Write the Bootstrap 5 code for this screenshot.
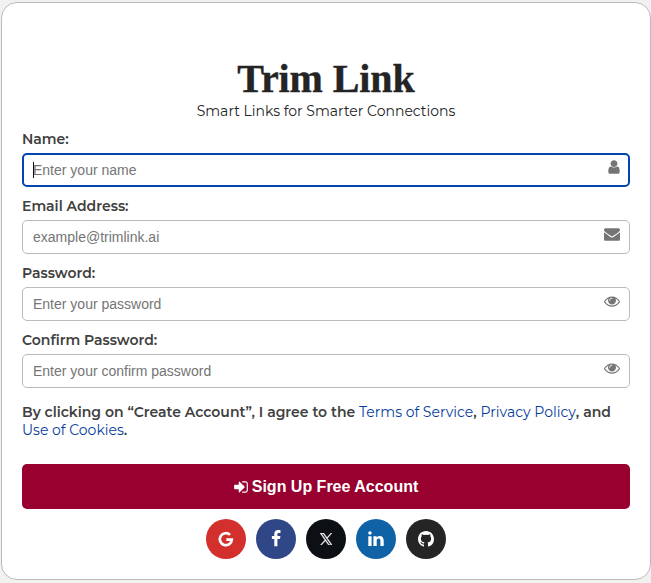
<!DOCTYPE html>
<html lang="en">
<head>
<meta charset="utf-8">
<meta name="viewport" content="width=device-width, initial-scale=1">
<title>Trim Link</title>
<link href="https://cdn.jsdelivr.net/npm/bootstrap@5.3.0/dist/css/bootstrap.min.css" rel="stylesheet">
<style>
body{background:#f1f1f1;font-family:Montserrat,Inter,sans-serif;font-size:14px;line-height:18px;color:#242424;height:583px;overflow:hidden}
.signup{margin:2px 0 0 1px;width:650px;height:578px;border:1px solid #bbb;border-radius:16px;padding:56px 20px 0}
.brand{font:700 40px/40px "Liberation Serif",serif;color:#242424;-webkit-text-stroke:.4px #242424;letter-spacing:-.1px}
.tagline{height:18px;margin:3px 0 10px}
.field-row{margin-bottom:10px}
.field-label{display:block;font-weight:600;color:#404040;line-height:18px;margin-bottom:5px}
.field{height:34px;border:1px solid #bbb;border-radius:5px;padding:0 10px;font:14px "Liberation Sans",sans-serif;color:#333;box-shadow:none!important}
.field::placeholder{color:#757575;opacity:1}
.field.active{border:2px solid #0443b4;padding:0 9px}
.field-icon{position:absolute;right:10px;top:6px;width:16px;height:16px;fill:#757575}
.user-icon{right:8px}
.caret{position:absolute;left:11px;top:9px;width:1px;height:16px;background:#111}
.terms{font-weight:600;color:#404040;line-height:18px;margin:15px 0 25px}
.terms a{font-weight:400;color:#063d9b}
.submit{height:45px;background:#97002f!important;border:0;border-radius:5px;color:#fff!important;font:700 16px "Liberation Sans",sans-serif;gap:3px;padding:0 1px 0 0}
.social-row{gap:10px;margin-top:10px}
.social{width:40px;height:40px;border-radius:50%}
.social svg{fill:#fff}
.google{background:#d32f2d}
.facebook{background:#304787}
.xcorp{background:#0c1015}
.linkedin{background:#1062a7}
.github{background:#252525}
</style>
<script src="https://cdn.jsdelivr.net/npm/bootstrap@5.3.0/dist/js/bootstrap.bundle.min.js"></script>
</head>
<body>
<main class="signup bg-white">
<form>
<h1 class="brand text-center mb-0">Trim Link</h1>
<p class="tagline text-center">Smart Links for Smarter Connections</p>
<div class="field-row">
<label class="field-label" for="name">Name:</label>
<div class="position-relative"><input id="name" class="form-control field active" placeholder="Enter your name"><span class="caret"></span>
<svg class="field-icon user-icon" viewBox="0 0 1792 1792"><path d="M1536 1399q0 109-62.5 187t-150.5 78h-854q-88 0-150.5-78t-62.5-187q0-85 8.5-160.5t31.5-152 58.5-131 94-89 134.5-34.5q131 128 313 128t313-128q76 0 134.5 34.5t94 89 58.5 131 31.5 152 8.5 160.5zm-256-887q0 159-112.5 271.5t-271.5 112.5-271.5-112.5-112.5-271.5 112.5-271.5 271.5-112.5 271.5 112.5 112.5 271.5z"/></svg></div>
</div>
<div class="field-row">
<label class="field-label" for="email">Email Address:</label>
<div class="position-relative"><input id="email" class="form-control field" placeholder="example@trimlink.ai">
<svg class="field-icon" viewBox="0 0 1792 1792"><path d="M1792 710v794q0 66-47 113t-113 47h-1472q-66 0-113-47t-47-113v-794q44 49 101 87 362 246 497 345 57 42 92.5 65.5t94.5 48 110 24.5h2q51 0 110-24.5t94.5-48 92.5-65.5q170-123 498-345 57-39 100-87zm0-294q0 79-49 151t-122 123q-376 261-468 325-10 7-42.5 31t-54 38.5-52 32.5-57.5 27-50 9h-2q-23 0-50-9t-57.5-27-52-32.5-54-38.5-42.5-31q-91-64-262-182.5t-205-142.5q-62-42-117-115.5t-55-136.5q0-78 41.5-130t118.5-52h1472q65 0 112.5 47t47.5 113z"/></svg></div>
</div>
<div class="field-row">
<label class="field-label" for="pass">Password:</label>
<div class="position-relative"><input id="pass" type="password" class="form-control field" placeholder="Enter your password">
<svg class="field-icon" viewBox="0 0 1792 1792"><path id="eye" d="M1664 960q-152-236-381-353 61 104 61 225 0 185-131.5 316.5t-316.5 131.5-316.5-131.5-131.5-316.5q0-121 61-225-229 117-381 353 133 205 333.5 326.5t434.5 121.5 434.5-121.5 333.5-326.5zm-720-384q0-20-14-34t-34-14q-125 0-214.5 89.5t-89.5 214.5q0 20 14 34t34 14 34-14 14-34q0-86 61-147t147-61q20 0 34-14t14-34zm848 384q0 34-20 69-140 230-376.5 368.5t-499.5 138.5-499.5-139-376.5-368q-20-35-20-69t20-69q140-229 376.5-368t499.5-139 499.5 139 376.5 368q20 35 20 69z"/></svg></div>
</div>
<div>
<label class="field-label" for="confirm">Confirm Password:</label>
<div class="position-relative"><input id="confirm" type="password" class="form-control field" placeholder="Enter your confirm password">
<svg class="field-icon" viewBox="0 0 1792 1792"><use href="#eye"/></svg></div>
</div>
<p class="terms">By clicking on “Create Account”, I agree to the <a class="text-decoration-none" href="#">Terms of Service</a>, <a class="text-decoration-none" href="#">Privacy Policy</a>, and<br><a class="text-decoration-none" href="#">Use of Cookies</a>.</p>
<button type="button" class="btn submit w-100 d-flex justify-content-center align-items-center"><svg width="16" height="16" fill="#fff" viewBox="0 0 1792 1792"><path d="M1312 896q0 26-19 45l-544 544q-19 19-45 19t-45-19-19-45v-288h-448q-26 0-45-19t-19-45v-384q0-26 19-45t45-19h448v-288q0-26 19-45t45-19 45 19l544 544q19 19 19 45zm352-352v704q0 119-84.5 203.5t-203.5 84.5h-320q-13 0-22.5-9.5t-9.5-22.5q0-4-1-20t-.5-26.5 3-23.5 10-19.5 20.5-6.5h320q66 0 113-47t47-113v-704q0-66-47-113t-113-47h-312l-11.5-1-11.5-3-8-5.5-7-9-2-13.5q0-4-1-20t-.5-26.5 3-23.5 10-19.5 20.5-6.5h320q119 0 203.5 84.5t84.5 203.5z"/></svg>Sign Up Free Account</button>
<div class="social-row d-flex justify-content-center">
<a href="#" aria-label="Google" class="social google d-flex align-items-center justify-content-center"><svg width="18" height="18" viewBox="0 0 18 18"><path d="M13 4.900A6 6 0 1 0 14.800 9.600H9.300" fill="none" stroke="#fff" stroke-width="2.700"/></svg></a>
<a href="#" aria-label="Facebook" class="social facebook d-flex align-items-center justify-content-center"><svg width="18" height="18" viewBox="0 0 18 18"><path d="M13.500.2v2.800h-1.700c-1.100 0-1.400.5-1.400 1.300v1.800h3l-.4 2.800h-2.600v7.300H7.300V8.900H4.900V6.100h2.400V3.900C7.300 1.400 8.800.1 11.200.1c1 0 1.900.1 2.300.1Z"/></svg></a>
<a href="#" aria-label="X" class="social xcorp d-flex align-items-center justify-content-center"><svg width="12.500" height="12.500" viewBox="0 0 16 16"><path stroke="#fff" stroke-width=".5" d="M9.520 6.780 15.480 0h-1.410L8.900 5.880 4.770 0H0l6.250 8.900L0 16h1.410l5.460-6.200L11.230 16H16L9.520 6.780ZM7.590 8.970l-.63-.88L1.920 1.040h2.170l4.060 5.690.63.89 5.290 7.390H11.900L7.590 8.970Z"/></svg></a>
<a href="#" aria-label="LinkedIn" class="social linkedin d-flex align-items-center justify-content-center"><svg width="18" height="18" viewBox="0 0 18 18"><path d="M1.300 6.200h3.300v9.700H1.300zM2.950 1.300a1.750 1.750 0 1 1 0 3.500 1.750 1.750 0 0 1 0-3.500ZM6.400 6.200h3.200v1.400c.5-.8 1.400-1.650 3.100-1.650 2.700 0 4 1.750 4 4.550v5.400h-3.300v-5.100c0-1.300-.5-2.200-1.700-2.200-1.300 0-2 .9-2 2.200v5.100H6.400z"/></svg></a>
<a href="#" aria-label="GitHub" class="social github d-flex align-items-center justify-content-center"><svg width="16" height="16" viewBox="0 0 16 16"><path d="M8 0C3.580 0 0 3.580 0 8c0 3.540 2.290 6.530 5.470 7.590.4.070.55-.17.55-.38v-2.600h4v2.600c0 .21.150.46.550.38A8.010 8.010 0 0 0 16 8c0-4.420-3.580-8-8-8Z"/><path fill="#252525" d="M6 14.500v-1.100c-2 .4-2.700-.5-3-1.400-.2-.5-.5-.7-.8-1 .9-.3 1.400.3 1.700.8.600.9 1.300.8 2.100.6.100-.5.300-.8.500-1-1.800-.2-3.600-.9-3.600-3.900 0-.9.300-1.600.8-2.200-.1-.3-.3-1 .1-2.100 0 0 .7-.2 2.200.8a7.500 7.500 0 0 1 4 0c1.500-1 2.200-.8 2.200-.8.400 1.100.2 1.900.1 2.100.5.600.8 1.300.8 2.200 0 3.100-1.900 3.700-3.600 3.900.3.300.5.700.5 1.500v3.100H6z"/></svg></a>
</div>
</form>
</main>
</body>
</html>
